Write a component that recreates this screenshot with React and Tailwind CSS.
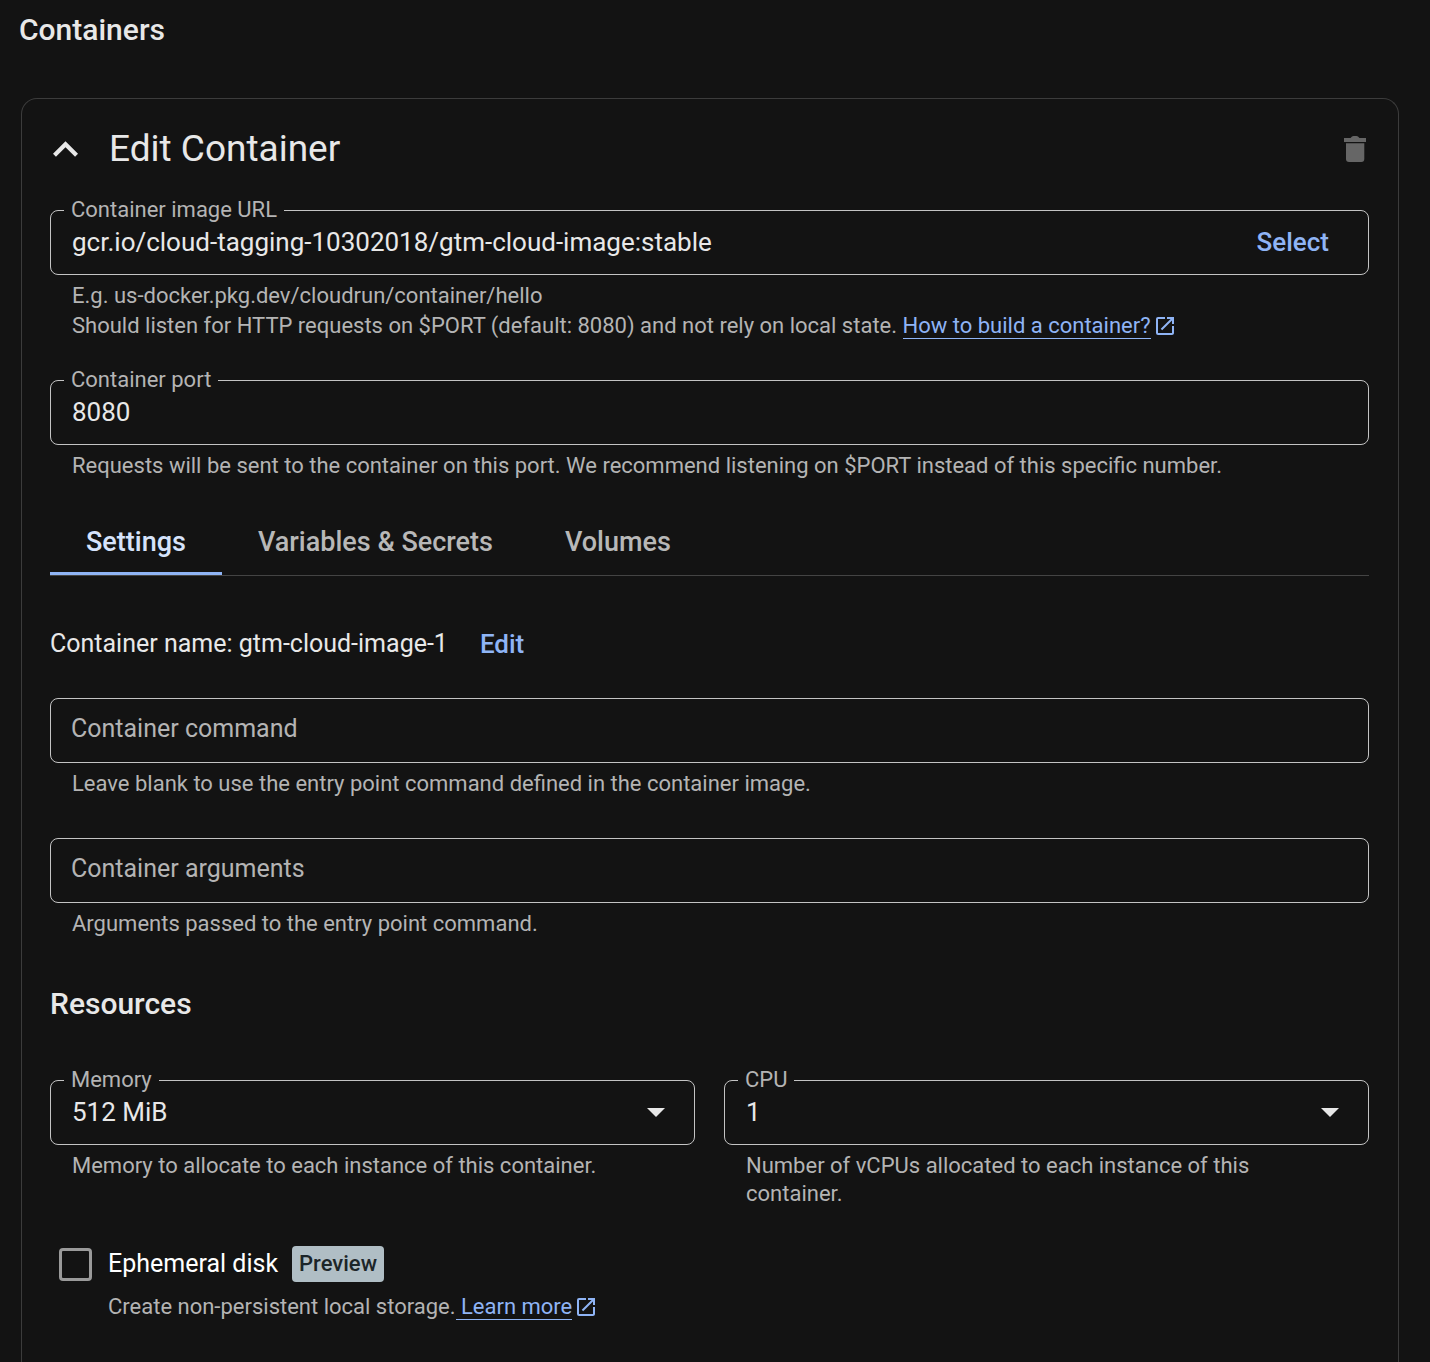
import React, { useState } from 'react'
import { MdOpenInNew } from 'react-icons/md'

const TABS = ['Settings', 'Variables & Secrets', 'Volumes']

const ChevronUp = () => (
  <svg viewBox="6 8 12 7.41" className="w-[25px] h-4" fill="currentColor" aria-hidden="true">
    <path d="M7.41 15.41 12 10.83l4.59 4.58L18 14l-6-6-6 6z" />
  </svg>
)

const TrashIcon = () => (
  <svg viewBox="0 0 22 26" className="w-[22px] h-[26px]" fill="currentColor" aria-hidden="true">
    <path d="M0 2h6.5L8 .6Q8.500 0 9.500 0h3q1 0 1.500.6L15.500 2H22v4H0z" />
    <path d="M2 7.300h18.300V23a3 3 0 0 1-3 3H5a3 3 0 0 1-3-3z" />
  </svg>
)

const Hint = ({ id, children }) => (
  <p id={id} className="pl-[22px] pr-10 text-[22px] leading-7 text-[#b4b4b4]">
    {children}
  </p>
)

const ExternalLink = ({ children }) => (
  <a href="#" className="text-[#8fb4f5]">
    <span className="border-b border-[#8fb4f5] whitespace-pre">{children}</span>
    <MdOpenInNew className="inline-block w-6 h-6 ml-0.5 align-[-5px]" aria-hidden="true" />
  </a>
)

// Outlined box whose label sits in a notch of the top border
const OutlinedField = ({ id, label, children }) => (
  <fieldset className="min-w-0 rounded-lg border border-[#c4c4c4] px-[13px] pb-[10px]">
    <legend className="h-5 px-[7px] text-[22px] leading-5 text-[#b4b4b4]">
      <label htmlFor={id}>{label}</label>
    </legend>
    <div className="flex h-11 items-center">{children}</div>
  </fieldset>
)

const PlainField = ({ id, label, hint }) => (
  <div>
    <input
      id={id}
      type="text"
      aria-label={label}
      aria-describedby={`${id}-hint`}
      placeholder={label}
      className="block w-full h-[65px] rounded-lg border border-[#c4c4c4] bg-transparent px-5 pb-1 text-[25px] placeholder:text-[#b4b4b4] outline-none"
    />
    <div className="mt-[7px]">
      <Hint id={`${id}-hint`}>{hint}</Hint>
    </div>
  </div>
)

const SelectField = ({ id, label, options, hint }) => (
  <div>
    <OutlinedField id={id} label={label}>
      <div className="relative w-full">
        <select
          id={id}
          aria-describedby={`${id}-hint`}
          className="block w-full appearance-none bg-transparent pl-2 pr-12 text-[26px] leading-10 outline-none"
        >
          {options.map((option) => (
            <option key={option} className="bg-[#131313]">{option}</option>
          ))}
        </select>
        <svg
          viewBox="0 0 18 9"
          className="pointer-events-none absolute right-4 top-4 w-[18px] h-[9px]"
          fill="currentColor"
          aria-hidden="true"
        >
          <path d="M0 0h18L9 9z" />
        </svg>
      </div>
    </OutlinedField>
    <div className="mt-[7px]">
      <Hint id={`${id}-hint`}>{hint}</Hint>
    </div>
  </div>
)

const App = () => {
  const [tab, setTab] = useState('Settings')

  return (
    <main className="flex min-h-screen flex-col bg-[#131313] pt-3 pl-[21px] pr-[31px] font-['Roboto',sans-serif] text-[#e8e8e8]">
      <h2 className="-ml-0.5 text-[30px] leading-9 font-medium">Containers</h2>

      <section className="mt-[50px] flex-1 rounded-t-2xl border border-b-0 border-[#3c3c3c] pt-[26px] pl-7 pr-[29px] pb-8">
        <div className="flex h-12 items-center">
          <button type="button" aria-label="Collapse" className="px-[3px]">
            <ChevronUp />
          </button>
          <h3 className="ml-7 text-[37px] leading-[48px]">Edit Container</h3>
          <button type="button" aria-label="Delete container" className="ml-auto px-[3px] text-[#666]">
            <TrashIcon />
          </button>
        </div>

        <div className="mt-[27px]">
          <OutlinedField id="image-url" label="Container image URL">
            <input
              id="image-url"
              type="text"
              defaultValue="gcr.io/cloud-tagging-10302018/gtm-cloud-image:stable"
              className="min-w-0 flex-1 bg-transparent px-2 text-[26px] outline-none"
            />
            <button type="button" className="mr-[26px] text-[26px] font-medium text-[#8fb4f5]">
              Select
            </button>
          </OutlinedField>
          <div className="mt-[7px] flex flex-col gap-0.5">
            <Hint>E.g. us-docker.pkg.dev/cloudrun/container/hello</Hint>
            <Hint>
              Should listen for HTTP requests on $PORT (default: 8080) and not rely on local state.{' '}
              <ExternalLink>How to build a container?</ExternalLink>
            </Hint>
          </div>
        </div>

        <div className="mt-[30px]">
          <OutlinedField id="port" label="Container port">
            <input
              id="port"
              type="text"
              inputMode="numeric"
              defaultValue="8080"
              className="min-w-0 flex-1 bg-transparent px-2 text-[26px] outline-none"
            />
          </OutlinedField>
          <div className="mt-[7px]">
            <Hint>
              Requests will be sent to the container on this port. We recommend listening on $PORT instead of this specific number.
            </Hint>
          </div>
        </div>

        <div role="tablist" className="mt-8 flex border-b border-[#444]">
          {TABS.map((name) => (
            <button
              key={name}
              type="button"
              role="tab"
              aria-selected={tab === name}
              onClick={() => setTab(name)}
              className={`h-[63px] border-b-[3px] px-9 text-[27px] font-medium ${
                tab === name ? 'border-[#8fb4f5] text-[#d6e3fb]' : 'border-transparent text-[#b8b8b8]'
              }`}
            >
              {name}
            </button>
          ))}
        </div>

        <div className="mt-[50px] flex h-9 items-center gap-8">
          <span className="text-[25px]">Container name: gtm-cloud-image-1</span>
          <button type="button" className="text-[26px] font-medium text-[#8fb4f5]">Edit</button>
        </div>

        <div className="mt-9 flex flex-col gap-10">
          <PlainField
            id="command"
            label="Container command"
            hint="Leave blank to use the entry point command defined in the container image."
          />
          <PlainField
            id="arguments"
            label="Container arguments"
            hint="Arguments passed to the entry point command."
          />
        </div>

        <h4 className="mt-12 text-[30px] leading-9 font-medium">Resources</h4>

        <div className="mt-12 grid grid-cols-2 gap-[29px]">
          <SelectField
            id="memory"
            label="Memory"
            options={['512 MiB', '1 GiB', '2 GiB', '4 GiB']}
            hint="Memory to allocate to each instance of this container."
          />
          <SelectField
            id="cpu"
            label="CPU"
            options={['1', '2', '4', '8']}
            hint="Number of vCPUs allocated to each instance of this container."
          />
        </div>

        <div className="mt-[38px] flex h-9 items-center pl-[9px]">
          <input
            id="ephemeral-disk"
            type="checkbox"
            className="size-[33px] appearance-none rounded border-[3px] border-[#9a9a9a] checked:bg-[#8fb4f5]"
          />
          <label htmlFor="ephemeral-disk" className="ml-4 text-[25px] text-white">Ephemeral disk</label>
          <span className="ml-3.5 rounded-sm bg-[#b0bec5] px-[7px] text-[22px] leading-9 font-medium text-[#1c2529]">Preview</span>
        </div>
        <p className="mt-[11px] pl-[58px] text-[22px] leading-7 text-[#b4b4b4]">
          Create non-persistent local storage.
          <ExternalLink>{' Learn more'}</ExternalLink>
        </p>
      </section>
    </main>
  )
}

export default App
